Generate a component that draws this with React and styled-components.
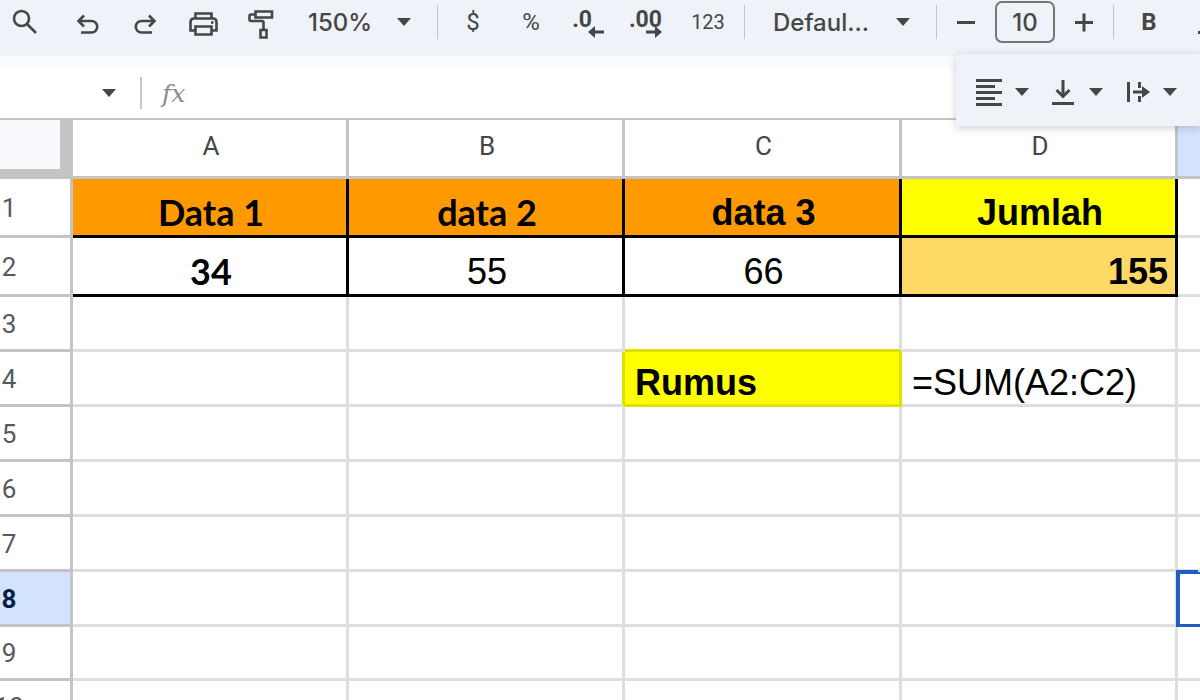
import React from 'react'
import styled, { createGlobalStyle } from 'styled-components'

const columns = ['A', 'B', 'C', 'D', 'E']

const rows = [
  {
    height: 59,
    cells: [
      { text: 'Data 1', bg: '#ff9900', bold: true, boxed: true, humanist: true },
      { text: 'data 2', bg: '#ff9900', bold: true, boxed: true, humanist: true },
      { text: 'data 3', bg: '#ff9900', bold: true, boxed: true },
      { text: 'Jumlah', bg: '#ffff00', bold: true, boxed: true },
      {},
    ],
  },
  {
    height: 59,
    cells: [
      { text: '34', bold: true, boxed: true, humanist: true },
      { text: '55', boxed: true },
      { text: '66', boxed: true },
      { text: '155', bg: '#ffd966', bold: true, boxed: true, align: 'right' },
      {},
    ],
  },
  { height: 55, cells: [{}, {}, { above: true }, {}, {}] },
  {
    height: 55,
    cells: [
      {},
      { beside: true },
      { text: 'Rumus', bg: '#ffff00', bold: true, align: 'left', tinted: true },
      { text: '=SUM(A2:C2)', align: 'left' },
      {},
    ],
  },
  { height: 55, cells: [{}, {}, {}, {}, {}] },
  { height: 55, cells: [{}, {}, {}, {}, {}] },
  { height: 55, cells: [{}, {}, {}, {}, {}] },
  { height: 55, active: true, cells: [{}, {}, {}, {}, { active: true }] },
  { height: 54, cells: [{}, {}, {}, {}, {}] },
  { height: 54, cells: [{}, {}, {}, {}, {}] },
]

const Caret = () => (
  <svg width="14" height="8" viewBox="0 0 14 8" aria-hidden="true">
    <path d="M0 0h14L7 8z" fill="currentColor" />
  </svg>
)

const SearchIcon = () => (
  <Icon viewBox="0 0 28 28">
    <circle cx="10.500" cy="10.500" r="7.500" />
    <path d="M16 16l9 9" />
  </Icon>
)

const UndoIcon = () => (
  <Icon viewBox="0 0 28 28">
    <path d="M10 5.500L4.500 11L10 16.500M4.500 11H17.500a5.700 5.700 0 0 1 0 11.500H7" />
  </Icon>
)

const RedoIcon = () => (
  <Icon viewBox="0 0 28 28">
    <path d="M18 5.500L23.500 11L18 16.500M23.500 11H10.500a5.700 5.700 0 0 0 0 11.500H21" />
  </Icon>
)

const PrintIcon = () => (
  <Icon $size={32} viewBox="0 0 32 32">
    <path d="M8.500 12.500V7.500h16v5" />
    <path d="M8.500 24.500H3.500v-8.500q0-3.500 3.500-3.500h19q3.500 0 3.500 3.500v8.500H24.500" />
    <path d="M8.500 20.500h16v8h-16z" />
    <path d="M24 16.500h2.500" />
  </Icon>
)

const PaintIcon = () => (
  <Icon $size={32} viewBox="0 0 32 32">
    <path d="M10.500 3.500h16.500v6h-16.500zM10.500 6.500H6q-1.500 0-1.500 1.500v3.500q0 1.500 1.500 1.500h11q1.500 0 1.500 1.500v7" />
    <path d="M15.500 22h6v7.500h-6z" />
  </Icon>
)

const AlignIcon = () => (
  <Icon $stroke={3} viewBox="0 0 28 28">
    <path d="M1 2.500h26M1 8.500h19M1 14.500h26M1 20.500h19M1 26.500h26" />
  </Icon>
)

const BottomIcon = () => (
  <Icon $stroke={3} viewBox="0 0 28 28">
    <path d="M14 2v16M7.500 12L14 18.500L20.500 12M3 25.500h22" />
  </Icon>
)

const OverflowIcon = () => (
  <Icon $stroke={3} viewBox="0 0 28 28">
    <path d="M5.500 4v20M16.500 4v6M16.500 18v6M10 14h12" />
    <path d="M19 8l8 6l-8 6z" fill="currentColor" stroke="none" />
  </Icon>
)

const ArrowLeft = () => (
  <svg width="16" height="12" viewBox="0 0 16 12" aria-hidden="true">
    <path d="M7 0v4.500h9v3H7V12L0 6z" fill="currentColor" />
  </svg>
)

const ArrowRight = () => (
  <svg width="16" height="12" viewBox="0 0 16 12" aria-hidden="true">
    <path d="M9 0v4.500H0v3h9V12l7-6z" fill="currentColor" />
  </svg>
)

const App = () => {
  return (
    <Page>
      <GlobalStyle />
      <Toolbar>
        <Tool $w={50} aria-label="Search the menus"><SearchIcon /></Tool>
        <Tool $w={76} $low aria-label="Undo"><UndoIcon /></Tool>
        <Tool $w={38} $low aria-label="Redo"><RedoIcon /></Tool>
        <Tool $w={78} aria-label="Print"><PrintIcon /></Tool>
        <Tool $w={38} $low aria-label="Paint format"><PaintIcon /></Tool>
        <Picker $w={157} aria-label="Zoom">
          <span>150%</span>
          <Caret />
        </Picker>
        <Divider />
        <Tool $w={70} $size={24} aria-label="Currency">$</Tool>
        <Tool $w={46} $size={24} aria-label="Percent">%</Tool>
        <Decimal $w={60} $shift={12} aria-label="Decrease decimals"><b>.0</b><ArrowLeft /></Decimal>
        <Decimal $w={58} $shift={0} aria-label="Increase decimals"><b>.00</b><ArrowRight /></Decimal>
        <Tool $w={72} $size={20} aria-label="More formats">123</Tool>
        <Divider />
        <Picker $w={191} aria-label="Font">
          <span>Defaul...</span>
          <Caret />
        </Picker>
        <Divider />
        <Tool $w={58} aria-label="Decrease font size">
          <Icon $stroke={3} viewBox="0 0 28 28"><path d="M5 14.500h18" /></Icon>
        </Tool>
        <SizeInput aria-label="Font size" defaultValue="10" />
        <Tool $w={58} aria-label="Increase font size">
          <Icon $stroke={3} viewBox="0 0 28 28"><path d="M5 14.500h18M14 5.500v18" /></Icon>
        </Tool>
        <Divider />
        <Tool $w={70} $size={24} $bold aria-label="Bold">B</Tool>
        <Tool $w={38} aria-label="Italic">
          <Icon $stroke={3} viewBox="0 0 28 28"><path d="M9 24.500h10M14 24.500l5-18M14 6.500h10" /></Icon>
        </Tool>
      </Toolbar>

      <FormulaBar>
        <NameBox aria-label="Name box"><Caret /></NameBox>
        <Fx>fx</Fx>
        <FormulaInput aria-label="Formula" />
        <Overflow>
          <MenuTool aria-label="Horizontal align"><AlignIcon /><Caret /></MenuTool>
          <MenuTool aria-label="Vertical align"><BottomIcon /><Caret /></MenuTool>
          <MenuTool aria-label="Text wrapping"><OverflowIcon /><Caret /></MenuTool>
        </Overflow>
      </FormulaBar>

      <Sheet>
        <colgroup>
          <Col $w={73} />
          <Col $w={276} />
          <Col $w={276} />
          <Col $w={277} />
          <Col $w={276} />
          <col />
        </colgroup>
        <thead>
          <tr>
            <Corner />
            {columns.map((name) => (
              <ColumnHead key={name} scope="col" $active={name === 'E'}>
                {name !== 'E' && name}
              </ColumnHead>
            ))}
          </tr>
        </thead>
        <tbody>
          {rows.map((row, i) => (
            <Row key={i} $height={row.height}>
              <RowHead scope="row" $active={row.active}>
                <RowNumber>{i + 1}</RowNumber>
              </RowHead>
              {row.cells.map((cell, j) => (
                <Cell
                  key={j}
                  $bg={cell.bg}
                  $bold={cell.bold}
                  $boxed={cell.boxed}
                  $align={cell.align}
                  $humanist={cell.humanist}
                  $tinted={cell.tinted}
                  $above={cell.above}
                  $beside={cell.beside}
                  $active={cell.active}
                >
                  {cell.text}
                </Cell>
              ))}
            </Row>
          ))}
        </tbody>
      </Sheet>
    </Page>
  )
}

export default App

const GlobalStyle = createGlobalStyle`
* {
    box-sizing: border-box;
}

body {
    margin: 0;
    background-color: #ffffff;
    overflow: hidden;
}

button, input {
    font-family: inherit;
    color: inherit;
    border: 0;
    padding: 0;
    background: none;
}
`

const Page = styled.main`
height: 100vh;
overflow: hidden;
font-family: Roboto, "Liberation Sans", sans-serif;
color: #444746;
`

const Icon = styled.svg.attrs({ 'aria-hidden': true })`
width: ${({ $size }) => $size || 28}px;
height: ${({ $size }) => $size || 28}px;
flex: none;
fill: none;
stroke: currentColor;
stroke-width: ${({ $stroke }) => $stroke || 2.6};
`

const Toolbar = styled.div`
display: flex;
align-items: center;
height: 56px;
padding-bottom: 12px;
background-color: #eff2f9;
overflow: hidden;
`

const Tool = styled.button`
display: flex;
flex: none;
align-items: center;
justify-content: center;
width: ${({ $w }) => $w}px;
height: 44px;
padding-top: ${({ $low }) => ($low ? 4 : 0)}px;
font-size: ${({ $size }) => $size || 24}px;
font-weight: ${({ $bold }) => ($bold ? 700 : 400)};
`

const Picker = styled.button`
display: flex;
flex: none;
align-items: center;
justify-content: space-between;
width: ${({ $w }) => $w}px;
height: 44px;
padding: 0 26px 0 28px;
font-family: Inter, sans-serif;
font-size: 24px;
font-weight: 500;
`

const Decimal = styled.button`
display: flex;
flex: none;
flex-direction: column;
align-items: flex-end;
justify-content: center;
width: ${({ $w }) => $w}px;
height: 44px;
padding: 4px 10px 0 0;
font-size: 23px;
line-height: 20px;

b {
    margin-bottom: -4px;
    padding-right: ${({ $shift }) => $shift}px;
}
`

const Divider = styled.span`
flex: none;
width: 1px;
height: 34px;
background-color: #c0c4cc;
`

const SizeInput = styled.input`
flex: none;
width: 60px;
height: 42px;
border: 2px solid #747775;
border-radius: 7px;
font-family: Inter, sans-serif;
font-size: 24px;
font-weight: 500;
text-align: center;
`

const FormulaBar = styled.div`
position: relative;
display: flex;
align-items: center;
height: 64px;
border-top: 12px solid #f9fbff;
border-bottom: 2px solid #c4c4c4;
`

const NameBox = styled.button`
display: flex;
justify-content: flex-end;
width: 142px;
padding: 12px 24px 12px 0;
border-right: 2px solid #c4c7c5;
`

const Fx = styled.span`
padding-left: 20px;
font-family: "DejaVu Serif", serif;
font-size: 25px;
font-style: italic;
color: #8a8c8e;
`

const FormulaInput = styled.input`
flex: 1;
min-width: 0;
height: 40px;
margin-left: 16px;
`

/* floating row of tools that do not fit the main bar */
const Overflow = styled.div`
position: absolute;
top: -14px;
right: 0;
display: flex;
align-items: center;
gap: 20px;
height: 72px;
padding: 4px 23px 0 19px;
background-color: #eff2f9;
box-shadow: 0 2px 8px rgba(60, 64, 67, 0.25);
`

const MenuTool = styled.button`
display: flex;
align-items: center;
gap: 12px;
height: 44px;
`

const Sheet = styled.table`
width: 100%;
table-layout: fixed;
border-collapse: separate;
border-spacing: 0;
`

const Col = styled.col`
width: ${({ $w }) => $w}px;
`

const Corner = styled.td`
padding: 0;
background-color: #f8fafd;
border-right: 13px solid #c4c4c4;
border-bottom: 10px solid #c4c4c4;
`

const ColumnHead = styled.th`
height: 59px;
padding: 0 0 4px 3px;
border-right: 3px solid #c4c4c4;
border-bottom: 3px solid #c4c4c4;
background-color: ${({ $active }) => ($active ? '#d3e3fd' : '#ffffff')};
font-size: 26px;
font-weight: 400;

&:last-child {
    border-right: 0;
}
`

const Row = styled.tr`
height: ${({ $height }) => $height}px;
`

const RowHead = styled.th`
padding: 1px 0 0;
border-right: 3px solid #c4c4c4;
border-bottom: 3px solid #c4c4c4;
background-color: ${({ $active }) => ($active ? '#d3e3fd' : '#ffffff')};
color: ${({ $active }) => ($active ? '#041e49' : '#575a5a')};
font-size: 26px;
font-weight: ${({ $active }) => ($active ? 700 : 400)};
line-height: 28px;
`

const RowNumber = styled.div`
display: flex;
justify-content: center;
width: 18px;
`

const edge = ({ $boxed, $tinted }) => ($boxed ? '#000000' : $tinted ? '#e0e000' : '#dedede')

const Cell = styled.td`
padding: ${({ $boxed, $humanist }) => ($boxed && !$humanist ? 12 : 9)}px 7px 0 10px;
border-right: 3px solid ${({ $beside, ...p }) => ($beside ? '#e0e000' : edge(p))};
border-bottom: 3px solid ${({ $above, ...p }) => ($above ? '#e0e000' : edge(p))};
background-color: ${({ $bg }) => $bg || '#ffffff'};
color: #000000;
font-family: ${({ $humanist }) => ($humanist ? 'Lato, sans-serif' : '"Liberation Sans", Arial, sans-serif')};
font-size: 36px;
font-weight: ${({ $bold }) => ($bold ? 700 : 400)};
line-height: 40px;
text-align: ${({ $align }) => $align || 'center'};
white-space: nowrap;

&:last-child {
    border-right: 0;
}

${({ $active }) => $active && `
position: relative;
border-bottom-color: #1f5fbf;
box-shadow: -2px -2px #1f5fbf, -2px 0 #1f5fbf, inset 2px 2px #1f5fbf;
`}
`
